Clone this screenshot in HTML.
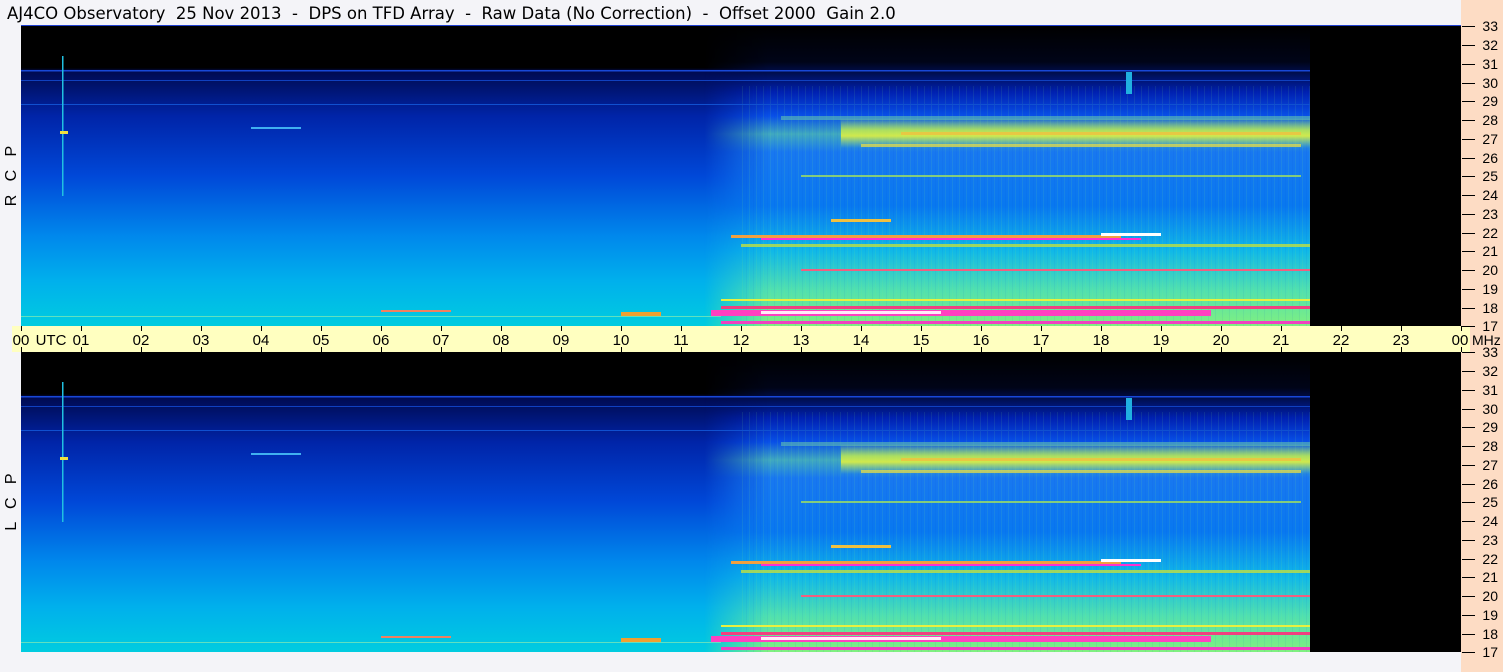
<!DOCTYPE html>
<html><head><meta charset="utf-8"><style>
html,body{margin:0;padding:0;background:#f4f4f8;}
svg{display:block;font-family:"Liberation Sans",sans-serif;}
</style></head><body>
<svg width="1503" height="672" viewBox="0 0 1503 672" xmlns="http://www.w3.org/2000/svg">
<defs>
<linearGradient id="gl" x1="0" y1="0" x2="0" y2="1">
<stop offset="0" stop-color="#000"/><stop offset="0.14" stop-color="#000"/>
<stop offset="0.15" stop-color="#000a50"/><stop offset="0.3" stop-color="#0024a8"/>
<stop offset="0.5" stop-color="#0048d8"/><stop offset="0.7" stop-color="#0088ec"/>
<stop offset="0.85" stop-color="#00b0ec"/><stop offset="1" stop-color="#00cce0"/>
</linearGradient>
<linearGradient id="gr" x1="0" y1="0" x2="0" y2="1">
<stop offset="0" stop-color="#000"/><stop offset="0.12" stop-color="#000418"/>
<stop offset="0.22" stop-color="#0020b0"/><stop offset="0.3" stop-color="#0850e8"/>
<stop offset="0.36" stop-color="#40a8c0"/><stop offset="0.42" stop-color="#1878f0"/>
<stop offset="0.6" stop-color="#0878f0"/><stop offset="0.75" stop-color="#10b8e8"/>
<stop offset="0.88" stop-color="#50e0b0"/><stop offset="1" stop-color="#80f080"/>
</linearGradient>
<linearGradient id="hm" x1="0" y1="0" x2="1" y2="0">
<stop offset="0" stop-color="#fff" stop-opacity="0"/><stop offset="0.53" stop-color="#fff" stop-opacity="0"/>
<stop offset="0.58" stop-color="#fff" stop-opacity="1"/><stop offset="1" stop-color="#fff" stop-opacity="1"/>
</linearGradient>
<linearGradient id="yb" x1="0" y1="0" x2="0" y2="1">
<stop offset="0" stop-color="#b0e860" stop-opacity="0"/><stop offset="0.4" stop-color="#c8f048" stop-opacity="0.8"/>
<stop offset="0.6" stop-color="#e0f040" stop-opacity="0.9"/><stop offset="1" stop-color="#90d880" stop-opacity="0"/>
</linearGradient>
<mask id="m"><rect x="0" y="0" width="1289" height="300" fill="url(#hm)"/></mask>
<pattern id="vt" width="7" height="300" patternUnits="userSpaceOnUse">
<rect x="0" y="0" width="1" height="300" fill="#80f080" opacity="0.1"/>
<rect x="4" y="0" width="1" height="300" fill="#0030c0" opacity="0.06"/>
</pattern>
<g id="panel">
<rect x="0" y="0" width="1440" height="300" fill="#000"/>
<rect x="0" y="0" width="1289" height="300" fill="url(#gl)"/>
<rect x="0" y="0" width="1289" height="300" fill="url(#gr)" mask="url(#m)"/>
<rect x="720" y="60" width="569" height="240" fill="url(#vt)"/>
<rect x="0" y="44" width="1289" height="1.5" fill="#1848d8"/>
<rect x="0" y="54" width="1289" height="1" fill="#1040c0"/>
<rect x="0" y="78" width="1289" height="1" fill="#1050d0"/>
<rect x="41" y="30" width="1.5" height="140" fill="#20c0e0"/>
<rect x="39" y="105" width="8" height="3" fill="#f0e040"/>
<rect x="230" y="101" width="50" height="2" fill="#40b0f0"/>
<rect x="760" y="90" width="529" height="4" fill="#60c0b0" opacity="0.6"/>
<rect x="820" y="92" width="469" height="30" fill="url(#yb)"/>
<rect x="880" y="106" width="400" height="3" fill="#f0c040" opacity="0.8"/>
<rect x="840" y="118" width="440" height="3" fill="#f0e040" opacity="0.7"/>
<rect x="780" y="149" width="500" height="2" fill="#a0e060" opacity="0.8"/>
<rect x="810" y="193" width="60" height="3" fill="#f0c040"/>
<rect x="710" y="209" width="390" height="3" fill="#f0a040"/>
<rect x="740" y="212" width="380" height="2" fill="#ff30d0"/>
<rect x="1080" y="207" width="60" height="3" fill="#ffffff"/>
<rect x="720" y="218" width="569" height="3" fill="#c0e040" opacity="0.8"/>
<rect x="780" y="243" width="509" height="2" fill="#f06080"/>
<rect x="700" y="273" width="589" height="2" fill="#e8f040"/>
<rect x="700" y="280" width="589" height="3" fill="#f04080"/>
<rect x="690" y="284" width="500" height="6" fill="#ff40c0"/>
<rect x="740" y="285" width="180" height="3" fill="#ffffff" opacity="0.9"/>
<rect x="700" y="295" width="589" height="3" fill="#f040c0"/>
<rect x="600" y="286" width="40" height="4" fill="#f0a030"/>
<rect x="360" y="284" width="70" height="2" fill="#f08060"/>
<rect x="0" y="290" width="700" height="1" fill="#60e0c0"/>
<rect x="1105" y="46" width="6" height="22" fill="#20b0e0"/>
</g>
</defs>
<rect x="0" y="0" width="1503" height="672" fill="#f4f4f8"/>
<text x="7" y="19" font-size="16.5" fill="#000" style="font-family:'DejaVu Sans',sans-serif" xml:space="preserve">AJ4CO Observatory  25 Nov 2013  -  DPS on TFD Array  -  Raw Data (No Correction)  -  Offset 2000  Gain 2.0</text>
<rect x="21" y="25" width="1441" height="1" fill="#2040d0"/>
<use href="#panel" x="21" y="26"/>
<use href="#panel" x="21" y="352"/>
<rect x="1461" y="0" width="42" height="672" fill="#fddcc4"/>
<rect x="12" y="326" width="1458" height="26" fill="#ffffc0"/>
<g font-size="15" fill="#000" text-anchor="middle">
<text x="21" y="345">00</text><text x="51" y="345">UTC</text>
<text x="81" y="345">01</text><text x="141" y="345">02</text><text x="201" y="345">03</text><text x="261" y="345">04</text><text x="321" y="345">05</text><text x="381" y="345">06</text><text x="441" y="345">07</text><text x="501" y="345">08</text><text x="561" y="345">09</text><text x="621" y="345">10</text><text x="681" y="345">11</text><text x="741" y="345">12</text><text x="801" y="345">13</text><text x="861" y="345">14</text><text x="921" y="345">15</text><text x="981" y="345">16</text><text x="1041" y="345">17</text><text x="1101" y="345">18</text><text x="1161" y="345">19</text><text x="1221" y="345">20</text><text x="1281" y="345">21</text><text x="1341" y="345">22</text><text x="1401" y="345">23</text><text x="1460" y="345">00</text>
<text x="1472" y="345" text-anchor="start" font-size="14">MHz</text>
</g>
<g stroke="#000" stroke-width="1">
<path d="M21.5 326v5M21.5 347v5M81.5 326v5M81.5 347v5M141.5 326v5M141.5 347v5M201.5 326v5M201.5 347v5M261.5 326v5M261.5 347v5M321.5 326v5M321.5 347v5M381.5 326v5M381.5 347v5M441.5 326v5M441.5 347v5M501.5 326v5M501.5 347v5M561.5 326v5M561.5 347v5M621.5 326v5M621.5 347v5M681.5 326v5M681.5 347v5M741.5 326v5M741.5 347v5M801.5 326v5M801.5 347v5M861.5 326v5M861.5 347v5M921.5 326v5M921.5 347v5M981.5 326v5M981.5 347v5M1041.5 326v5M1041.5 347v5M1101.5 326v5M1101.5 347v5M1161.5 326v5M1161.5 347v5M1221.5 326v5M1221.5 347v5M1281.5 326v5M1281.5 347v5M1341.5 326v5M1341.5 347v5M1401.5 326v5M1401.5 347v5M1461.5 326v5M1461.5 347v5"/>
</g>
<g font-size="14" fill="#000" text-anchor="end">
<text x="1498" y="31">33</text><text x="1498" y="50">32</text><text x="1498" y="69">31</text><text x="1498" y="88">30</text><text x="1498" y="106">29</text><text x="1498" y="125">28</text><text x="1498" y="144">27</text><text x="1498" y="163">26</text><text x="1498" y="181">25</text><text x="1498" y="200">24</text><text x="1498" y="219">23</text><text x="1498" y="238">22</text><text x="1498" y="256">21</text><text x="1498" y="275">20</text><text x="1498" y="294">19</text><text x="1498" y="313">18</text><text x="1498" y="331">17</text>
<text x="1498" y="357">33</text><text x="1498" y="376">32</text><text x="1498" y="395">31</text><text x="1498" y="414">30</text><text x="1498" y="432">29</text><text x="1498" y="451">28</text><text x="1498" y="470">27</text><text x="1498" y="489">26</text><text x="1498" y="507">25</text><text x="1498" y="526">24</text><text x="1498" y="545">23</text><text x="1498" y="564">22</text><text x="1498" y="582">21</text><text x="1498" y="601">20</text><text x="1498" y="620">19</text><text x="1498" y="639">18</text><text x="1498" y="657">17</text>
</g>
<g stroke="#000" stroke-width="1">
<path d="M1462 26.5h13M1462 45.5h13M1462 64.5h13M1462 83.5h13M1462 101.5h13M1462 120.5h13M1462 139.5h13M1462 158.5h13M1462 176.5h13M1462 195.5h13M1462 214.5h13M1462 233.5h13M1462 251.5h13M1462 270.5h13M1462 289.5h13M1462 308.5h13M1462 326.5h13"/>
<path d="M1462 352.5h13M1462 371.5h13M1462 390.5h13M1462 409.5h13M1462 427.5h13M1462 446.5h13M1462 465.5h13M1462 484.5h13M1462 502.5h13M1462 521.5h13M1462 540.5h13M1462 559.5h13M1462 577.5h13M1462 596.5h13M1462 615.5h13M1462 634.5h13M1462 652.5h13"/>
</g>
<g font-size="16" fill="#000" text-anchor="middle">
<text transform="translate(16,176) rotate(-90)" xml:space="preserve">R   C   P</text>
<text transform="translate(16,502) rotate(-90)" xml:space="preserve">L   C   P</text>
</g>
</svg>
</body></html>
